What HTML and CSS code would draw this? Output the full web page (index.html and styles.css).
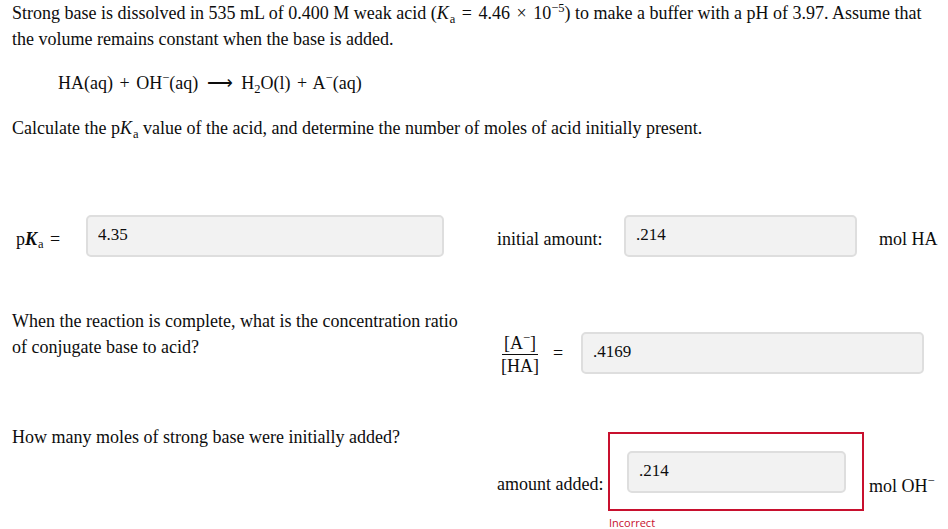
FILE: index.html
```html
<!DOCTYPE html>
<html>
<head>
<meta charset="utf-8">
<link rel="stylesheet" href="styles.css">
</head>
<body>
<div class="page">
  <p class="intro">Strong base is dissolved in 535 mL of 0.400 M weak acid (<i>K</i><sub class="ks">a</sub> <span class="op">=</span> 4.46 <span class="op">×</span> 10<sup>−5</sup>) to make a buffer with a pH of 3.97. Assume that the volume remains constant when the base is added.</p>
  <p class="equation">HA(aq) <span class="op">+</span> OH<sup>−</sup>(aq) <span class="arrow">⟶</span> H<sub>2</sub>O(l) <span class="op">+</span> A<sup>−</sup>(aq)</p>
  <p class="calc">Calculate the p<i>K</i><sub class="ks">a</sub> value of the acid, and determine the number of moles of acid initially present.</p>

  <div class="row row1">
    <div class="pka-label">p<i class="bk">K</i><sub class="ks">a</sub> <span class="op">=</span></div>
    <input class="field pka-field" type="text" value="4.35" readonly>
    <div class="init-label">initial amount:</div>
    <input class="field init-field" type="text" value=".214" readonly>
    <div class="unit">mol HA</div>
  </div>

  <div class="row row2">
    <div class="qcol"><p class="question q2">When the reaction is complete, what is the concentration ratio of conjugate base to acid?</p></div>
    <div class="frac-group">
      <div class="frac">
        <span class="num">[A<sup>−</sup>]</span>
        <span class="den">[HA]</span>
      </div>
      <span class="eq">=</span>
      <input class="field ratio-field" type="text" value=".4169" readonly>
    </div>
  </div>

  <div class="row row3">
    <div class="qcol"><p class="question q3">How many moles of strong base were initially added?</p></div>
    <div class="added-group">
      <div class="added-label">amount added:</div>
      <div class="answer-col">
        <div class="wrong-box">
          <input class="field added-field" type="text" value=".214" readonly>
        </div>
        <div class="incorrect">Incorrect</div>
      </div>
      <div class="unit unit-oh">mol OH<sup>−</sup></div>
    </div>
  </div>
</div>
</body>
</html>
```

FILE: styles.css
```css
* { box-sizing: border-box; }
html, body { margin: 0; padding: 0; background: #fff; }
body {
  font-family: "Liberation Serif", "Times New Roman", serif;
  font-size: 18px;
  color: #0d0d0d;
  line-height: 26px;
}
.page { padding: 0 0 0 12px; width: 948px; }
p { margin: 0; }
sub, sup { font-size: 12.5px; line-height: 0; position: relative; vertical-align: baseline; }
sup { top: -0.55em; }
sub { top: 0.3em; }
.ks { margin-left: 1px; }
.op { padding: 0 2px; }
.intro { width: 928px; }
.equation { margin-top: 18px; padding-left: 46px; }
.arrow { padding: 0 4px; }
.calc { margin-top: 19px; }

.row { display: flex; }
.row1 { margin-top: 74px; align-items: center; margin-left: -12px; }
.pka-label { width: 86px; padding-left: 16px; padding-top: 5px; }
.bk { font-weight: bold; }
.field {
  font-family: "Liberation Serif", "Times New Roman", serif;
  font-size: 17px;
  color: #0d0d0d;
  height: 42px;
  background: #f2f2f2;
  border: 2px solid #dedede;
  border-radius: 5px;
  padding: 0 10px 2px;
  outline: none;
}
.pka-field { width: 358px; }
.init-label { width: 180px; padding-left: 53px; padding-top: 5px; }
.init-field { width: 233px; }
.unit { padding-left: 22px; padding-top: 5px; }

.qcol { width: 487px; flex: none; }
.row2 { margin-top: 51px; }
.q2 { width: 460px; }
.frac-group { display: flex; align-items: center; margin-top: 21px; }
.frac { display: flex; flex-direction: column; align-items: center; width: 42px; margin-top: 4px; }
.frac .num { line-height: 20px; border-bottom: 1px solid #0d0d0d; padding: 0 2px 1px; }
.frac .den { line-height: 20px; padding-top: 1px; }
.eq { margin-left: 12px; width: 28px; }
.ratio-field { width: 343px; }

.row3 { margin-top: 48px; }
.added-group { display: flex; align-items: flex-start; margin-top: 8px; }
.added-label { width: 111px; margin-top: 39px; margin-left: -2px; }
.wrong-box {
  width: 256px;
  height: 79px;
  border: 2px solid #c8102e;
  padding: 17px 16px 16px 17px;
}
.added-field { width: 219px; }
.incorrect {
  font-family: "Open Sans", "Liberation Sans", sans-serif;
  font-size: 11px;
  line-height: 14px;
  color: #c8102e;
  margin-top: 5px;
  padding-left: 1px;
}
.unit-oh { padding-left: 5px; margin-top: 36px; }
```
